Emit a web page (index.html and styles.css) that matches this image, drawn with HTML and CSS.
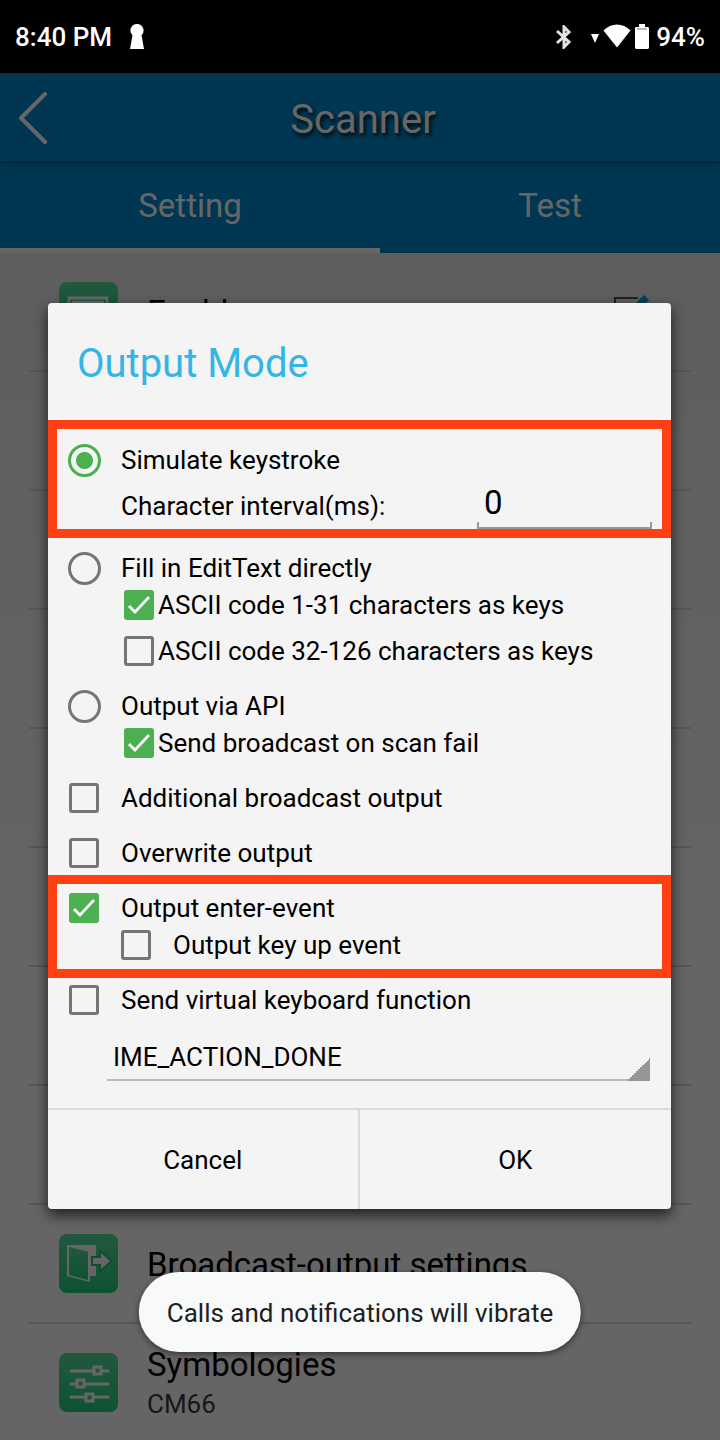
FILE: index.html
```html
<!DOCTYPE html>
<html lang="en">
<head>
  <meta charset="UTF-8">
  <meta name="viewport" content="width=device-width, initial-scale=1.0">
  <title>Scanner</title>
  <link rel="stylesheet" href="styles.css">
</head>
<body>
  <!-- Android status bar -->
  <div class="status-bar">
    <span class="clock">8:40 PM</span>
    <svg class="keyhole" width="14" height="25" viewBox="0 0 14 25"><path fill="#fff" d="M7 0a6.500 6.500 0 0 0-4.500 11.200L0 25h14l-2.500-13.800A6.500 6.500 0 0 0 7 0z"/></svg>
    <span class="status-right">
      <svg class="bluetooth" width="15" height="24" viewBox="0 0 15 24"><path fill="none" stroke="#e4e4e4" stroke-width="3" d="M1 6l12 11-5 5V2l5 5L1 18"/></svg>
      <svg class="signal" width="8" height="9" viewBox="0 0 8 9"><path fill="#fff" d="M0 0h8L4 9z"/></svg>
      <svg class="wifi" width="28" height="24" viewBox="0 0 28 24"><path fill="#fff" d="M14 23.500L0.500 6.500C8-1.500 20-1.500 27.500 6.500z"/></svg>
      <svg class="battery" width="14" height="25" viewBox="0 0 14 25"><path fill="#fff" d="M4 0h6v3h3l1 1v20l-1 1H1l-1-1V4l1-1h3z"/><path fill="#b8b8b8" d="M2 4h10v2H2z"/></svg>
      <span class="percent">94%</span>
    </span>
  </div>

  <div class="screen">
    <header class="title-bar">
      <button class="back" type="button" aria-label="Back">
        <svg width="30" height="54" viewBox="0 0 30 54"><path fill="none" stroke="#fff" stroke-width="4" stroke-linecap="round" stroke-linejoin="round" d="M27 2L3 26l24 24"/></svg>
      </button>
      <h1>Scanner</h1>
    </header>
    <nav class="tabs">
      <a class="tab active" href="#setting">Setting</a>
      <a class="tab" href="#test">Test</a>
    </nav>

    <ul class="settings">
      <li>
        <svg class="tile" width="59" height="59" viewBox="0 0 59 59">
          <defs>
            <linearGradient id="tileGreen" x1="0" y1="0" x2="0" y2="1">
              <stop offset="0" stop-color="#55dc9d"/>
              <stop offset="1" stop-color="#24ce80"/>
            </linearGradient>
          </defs>
          <rect width="59" height="59" rx="8" fill="url(#tileGreen)"/>
          <path fill="none" stroke="#fff" stroke-width="3" d="M10 16h38v24H10zM20 47h18"/>
          <path stroke="#fff" stroke-width="2" d="M13 20h32"/>
        </svg>
        <span class="label">Enable</span>
        <svg class="edit" width="36" height="36" viewBox="0 0 36 36">
          <path fill="none" stroke="#555" stroke-width="2" d="M25 4H2v31h29V14"/>
          <path fill="#12a0e0" d="M31 1l5 5-19 19-7 2 2-7z"/>
        </svg>
      </li>
      <li></li>
      <li></li>
      <li></li>
      <li></li>
      <li></li>
      <li></li>
      <li></li>
      <li>
        <svg class="tile" width="59" height="59" viewBox="0 0 59 59">
          <rect width="59" height="59" rx="8" fill="url(#tileGreen)"/>
          <path fill="#fff" d="M8 11h29v31h-6v6L8 42z"/>
          <path fill="url(#tileGreen)" d="M10 13l17 4c2 0 2 1 2 2v27L10 41z"/>
          <path fill="#fff" stroke="#34bf7f" stroke-width="4" paint-order="stroke" d="M34 24h8v-5l9 8-9 8v-5h-8z"/>
        </svg>
        <span class="label">Broadcast-output settings</span>
      </li>
      <li>
        <svg class="tile" width="59" height="59" viewBox="0 0 59 59">
          <rect width="59" height="59" rx="8" fill="url(#tileGreen)"/>
          <g fill="none" stroke="#fff" stroke-width="3" stroke-linecap="round">
            <path d="M12 18h23M43 18h6M12 31h6M26 31h23M12 44h15M35 44h14"/>
            <path d="M35 14h7v7h-7zM18 27h7v7h-7zM27 41h7v7h-7z"/>
          </g>
        </svg>
        <span class="label">Symbologies<small>CM66</small></span>
      </li>
    </ul>

    <div class="scrim">
      <form class="dialog">
        <h2>Output Mode</h2>

        <div class="group marked interval">
          <label class="row"><input type="radio" name="mode" checked>Simulate keystroke</label>
          <div class="interval-row">
            <label for="interval">Character interval(ms):</label>
            <input id="interval" type="text" inputmode="numeric" value="0">
          </div>
        </div>

        <div class="group">
          <label class="row"><input type="radio" name="mode">Fill in EditText directly</label>
          <label class="row sub"><input type="checkbox" checked>ASCII code 1-31 characters as keys</label>
          <label class="row sub spaced"><input type="checkbox">ASCII code 32-126 characters as keys</label>
        </div>

        <div class="group">
          <label class="row"><input type="radio" name="mode">Output via API</label>
          <label class="row sub"><input type="checkbox" checked>Send broadcast on scan fail</label>
        </div>

        <div class="group">
          <label class="row"><input type="checkbox">Additional broadcast output</label>
        </div>

        <div class="group">
          <label class="row"><input type="checkbox">Overwrite output</label>
        </div>

        <div class="group marked enter">
          <label class="row"><input type="checkbox" checked>Output enter-event</label>
          <label class="row nested"><input type="checkbox">Output key up event</label>
        </div>

        <div class="group">
          <label class="row"><input type="checkbox">Send virtual keyboard function</label>
        </div>

        <select class="spinner" aria-label="Keyboard function">
          <option>IME_ACTION_DONE</option>
        </select>

        <div class="buttons">
          <button type="button">Cancel</button>
          <button type="button">OK</button>
        </div>
      </form>
    </div>

    <div class="toast" role="status">Calls and notifications will vibrate</div>
  </div>
</body>
</html>
```
FILE: styles.css
```css
:root {
  --green: #4caf50;
  --grey: #757575;
  --mark: #ff4013;
  --panel: #f4f4f4;
}

* {
  box-sizing: border-box;
}

body {
  margin: 0;
  height: 100vh;
  display: flex;
  flex-direction: column;
  font-family: Roboto, sans-serif;
  font-size: 26px;
  color: #000;
}

button, input, select {
  font: inherit;
  color: inherit;
}

/* Status bar */
.status-bar {
  flex: none;
  display: flex;
  align-items: center;
  height: 73px;
  padding: 0 15px;
  background: #000;
  color: #fff;
  font-weight: 500;
}
.keyhole {
  margin-left: 18px;
}
.status-right {
  display: flex;
  align-items: center;
  margin-left: auto;
}
.signal {
  margin: 3px 4px 0 20px;
}
.wifi {
  margin-bottom: 2px;
}
.battery {
  margin: 0 7px 0 4px;
}

/* Page behind the dialog */
.screen {
  flex: 1;
  min-height: 0;
  position: relative;
  overflow: hidden;
  background: linear-gradient(#e6e6e6, #fdfdfd 70%);
}
.title-bar {
  display: grid;
  grid-template-columns: 60px 1fr 54px;
  align-items: center;
  height: 88px;
  padding-top: 4px;
  background: #0088cc;
  color: #fff;
  box-shadow: 0 1px 6px rgba(0, 0, 0, 0.5);
  position: relative;
}
.title-bar h1 {
  margin: 0;
  font-size: 40px;
  font-weight: 400;
  text-align: center;
  text-shadow: 2px 3px 4px rgba(0, 0, 0, 0.9);
}
.back {
  display: flex;
  padding: 0 0 0 18px;
  border: 0;
  background: none;
}
.tabs {
  display: grid;
  grid-template-columns: 19fr 17fr;
  background: #0088cc;
}
.tab {
  height: 92px;
  padding-top: 3px;
  border-bottom: 5px solid transparent;
  color: #fff;
  font-size: 33px;
  line-height: 84px;
  text-align: center;
  text-decoration: none;
}
.tab.active {
  border-bottom-color: #fff;
}
.settings {
  margin: 0;
  padding: 0 29px;
  list-style: none;
}
.settings li {
  display: flex;
  align-items: center;
  gap: 29px;
  height: 119px;
  padding: 0 42px 0 30px;
  border-bottom: 2px solid #d8d8d8;
}
.settings .label {
  flex: 1;
  padding-top: 3px;
  font-size: 33px;
  line-height: 40px;
}
.settings small {
  display: block;
  font-size: 26px;
  line-height: 38px;
  color: #3a3a3a;
}

/* Dialog */
.scrim {
  position: absolute;
  inset: 0;
  display: flex;
  align-items: center;
  padding: 0 49px 2px 48px;
  background: rgba(0, 0, 0, 0.6);
}
.dialog {
  flex: 1;
  border-radius: 4px;
  background: var(--panel);
  box-shadow: 0 6px 14px rgba(0, 0, 0, 0.7);
}
.dialog h2 {
  margin: 0;
  padding: 5px 29px 0;
  font-size: 40px;
  font-weight: 400;
  line-height: 112px;
  color: #33b5e5;
}
.group {
  padding: 0 20px;
  margin-bottom: 18px;
}
.row {
  display: flex;
  align-items: center;
  gap: 20px;
  height: 37px;
}
.row.sub {
  gap: 4px;
  padding-left: 56px;
}
.row.sub input {
  margin: 0;
}
.row.spaced {
  margin-top: 9px;
}
.row.nested {
  padding-left: 52px;
}

/* Groups framed in red */
.marked {
  border: 9px solid var(--mark);
  padding: 6px 11px 5px;
}
.marked.interval {
  padding: 13px 10px 0 11px;
  margin-bottom: 12px;
}
.marked.enter {
  margin-top: -15px;
  margin-bottom: 4px;
}
.interval-row {
  display: flex;
  justify-content: space-between;
  align-items: flex-end;
  height: 50px;
  padding-left: 53px;
  line-height: 46px;
}
.interval-row input {
  width: 175px;
  height: 50px;
  padding: 0 7px 2px;
  border: 0;
  border-radius: 0;
  font-size: 33px;
  background:
    linear-gradient(#999, #999) left bottom / 2px 7px no-repeat,
    linear-gradient(#999, #999) right bottom / 2px 7px no-repeat,
    linear-gradient(#999, #999) left bottom / 100% 2px no-repeat;
}

input[type="checkbox"],
input[type="radio"] {
  appearance: none;
  flex: none;
  border: 3px solid var(--grey);
}
input[type="checkbox"] {
  width: 30px;
  height: 30px;
  margin: 0 2px 0 1px;
  border-radius: 3px;
}
input[type="radio"] {
  width: 33px;
  height: 33px;
  margin: 0;
  border-radius: 50%;
}
input[type="checkbox"]:checked {
  border: 0;
  background: var(--green);
}
input[type="checkbox"]:checked::before {
  content: "";
  display: block;
  width: 30px;
  height: 30px;
  background: #fff;
  clip-path: polygon(4px 17px, 6px 15px, 11px 20px, 24px 6px, 26px 8px, 11px 24px);
}
input[type="radio"]:checked {
  border-color: var(--green);
  background: radial-gradient(circle, var(--green) 8px, transparent 9px);
}

.spinner {
  appearance: none;
  display: block;
  width: calc(100% - 80px);
  height: 46px;
  margin: -2px 21px 27px 59px;
  padding: 0 6px 2px;
  border: 0;
  border-radius: 0;
  background:
    linear-gradient(135deg, transparent 50%, #969696 50%) right bottom / 23px 23px no-repeat,
    linear-gradient(#bbb, #bbb) left bottom / 100% 2px no-repeat;
}

.buttons {
  display: grid;
  grid-template-columns: 1fr 1fr;
  border-top: 2px solid #dadada;
}
.buttons button {
  height: 99px;
  padding: 2px 0 0;
  border: 0;
  background: none;
}
.buttons button:first-child {
  border-right: 2px solid #dadada;
}

/* Toast */
.toast {
  position: absolute;
  bottom: 88px;
  left: 50%;
  transform: translateX(-50%);
  padding: 2px 28px 0;
  border-radius: 40px;
  background: #f8faf9;
  box-shadow: 0 2px 6px rgba(0, 0, 0, 0.5);
  color: #1e2021;
  line-height: 78px;
  white-space: nowrap;
}
```
